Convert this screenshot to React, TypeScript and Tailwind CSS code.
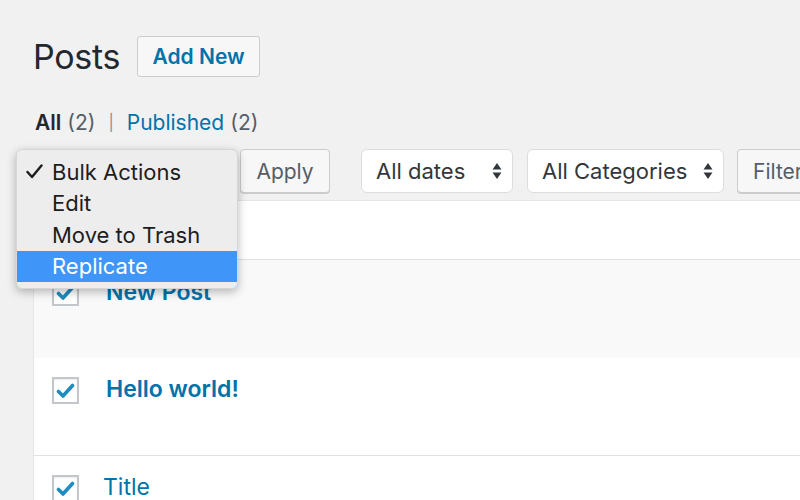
import React from 'react';

const font = { fontFamily: 'Inter, "Liberation Sans", sans-serif' };

function Arrows() {
  return (
    <svg width="10" height="18" viewBox="0 0 10 18" className="shrink-0">
      <path d="M5 1 L9.5 7.5 H0.5 Z" fill="#32373c" />
      <path d="M5 17 L9.5 10.5 H0.5 Z" fill="#32373c" />
    </svg>
  );
}

function Check() {
  return (
    <div className="w-[27px] h-[27px] border-2 border-[#c3c7cb] bg-white shadow-[inset_0_1px_2px_rgba(0,0,0,0.08)] flex items-center justify-center shrink-0">
      <svg width="19" height="16" viewBox="0 0 19 16">
        <path
          d="M2.5 8.5 L7 13 L16.5 2.5"
          fill="none"
          stroke="#1e8cbe"
          strokeWidth="3.6"
          strokeLinecap="round"
          strokeLinejoin="round"
        />
      </svg>
    </div>
  );
}

const menuItems = ['Bulk Actions', 'Edit', 'Move to Trash', 'Replicate'];

export default function App() {
  return (
    <div
      className="relative w-[800px] h-[500px] overflow-hidden bg-[#f1f1f1] text-[#23282d]"
      style={font}
    >
      <div className="pl-[33px]">
        {/* heading */}
        <div className="flex items-center gap-[17px] pt-[36px] h-[77px]">
          <h1 className="text-[34px] leading-none text-[#23282d] tracking-[-0.3px]">Posts</h1>
          <button className="h-[41px] w-[123px] border border-[#cccccc] bg-[#f7f7f7] rounded-[3px] text-[21px] font-semibold text-[#0073aa]">
            Add New
          </button>
        </div>

        {/* status links */}
        <div className="mt-[33px] h-[24px] flex items-center text-[21px] leading-none text-[#555d66]">
          <span className="font-semibold text-[#23282d] ml-[2px]">All</span>
          <span className="ml-[6px]">(2)</span>
          <span className="ml-[13px] text-[16px] text-[#8a8f94]">|</span>
          <span className="ml-[13px] text-[#0073aa]">Published</span>
          <span className="ml-[6px]">(2)</span>
        </div>

        {/* toolbar */}
        <div className="mt-[15px] h-[44px] flex items-center text-[22px] leading-none">
          <div className="shrink-0 w-[193px] h-[44px] rounded-[5px] border-2 border-[#5b9dd9] bg-white" />
          <button className="shrink-0 ml-[14px] w-[90px] h-[44px] border border-[#cccccc] bg-[#f7f7f7] rounded-[4px] shadow-[0_1px_0_#cccccc] text-[21px] text-[#555d66]">
            Apply
          </button>
          <div className="shrink-0 ml-[31px] w-[152px] h-[44px] rounded-[6px] border border-[#dddddd] bg-white flex items-center justify-between pl-[14px] pr-[10px] text-[#32373c]">
            <span>All dates</span>
            <Arrows />
          </div>
          <div className="shrink-0 ml-[14px] w-[197px] h-[44px] rounded-[6px] border border-[#dddddd] bg-white flex items-center justify-between pl-[14px] pr-[10px] text-[#32373c]">
            <span>All Categories</span>
            <Arrows />
          </div>
          <button className="shrink-0 ml-[13px] w-[90px] h-[44px] border border-[#cccccc] bg-[#f7f7f7] rounded-[4px] shadow-[0_1px_0_#cccccc] text-[21px] text-[#555d66] text-left pl-[15px]">
            Filter
          </button>
        </div>

        {/* table */}
        <div className="mt-[7px] border-t border-l border-[#e5e5e5] bg-white">
          <div className="h-[59px] border-b border-[#e1e1e1]" />
          <div className="h-[98px] bg-[#f9f9f9] flex items-start pt-[19px] pl-[18px]">
            <Check />
            <span className="ml-[27px] text-[23px] font-semibold text-[#0073aa] leading-[27px]">New Post</span>
          </div>
          <div className="h-[98px] bg-white flex items-start pt-[19px] pl-[18px] border-b border-[#e1e1e1]">
            <Check />
            <span className="ml-[27px] text-[23px] font-semibold text-[#0073aa] leading-[24px]">Hello world!</span>
          </div>
          <div className="h-[60px] bg-white flex items-start pt-[19px] pl-[18px]">
            <Check />
            <span className="ml-[24px] text-[23px] text-[#0073aa] leading-[24px]">Title</span>
          </div>
        </div>
      </div>

      {/* open bulk actions menu */}
      <div className="absolute left-[16px] top-[149px] w-[222px] rounded-[6px] bg-[#ededed] border border-[#d6d6d6] shadow-[0_3px_10px_rgba(0,0,0,0.28)] py-[6px] text-[22px] leading-none text-[#1d1d1d]">
        {menuItems.map((item, i) => (
          <div
            key={item}
            className={
              i === 3
                ? 'h-[31.5px] flex items-center bg-[#3f95f8] text-white'
                : 'h-[31.5px] flex items-center'
            }
          >
            <span className="w-[35px] pl-[9px] flex items-center">
              {i === 0 ? (
                <svg width="17" height="15" viewBox="0 0 17 15">
                  <path
                    d="M1.5 8 L6 13 L15.5 1.5"
                    fill="none"
                    stroke="#1d1d1d"
                    strokeWidth="2.4"
                    strokeLinecap="round"
                    strokeLinejoin="round"
                  />
                </svg>
              ) : null}
            </span>
            <span>{item}</span>
          </div>
        ))}
      </div>
    </div>
  );
}
